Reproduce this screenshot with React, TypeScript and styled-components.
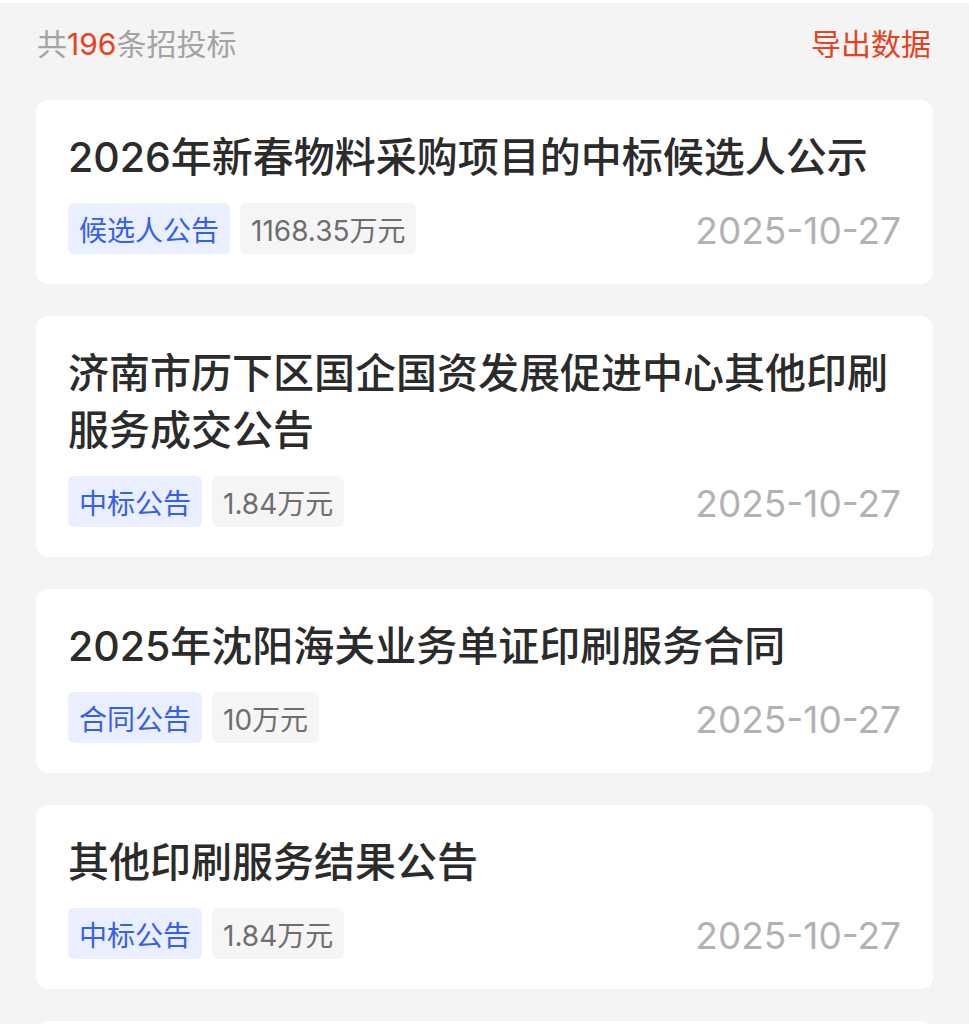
import React from "react";
import styled, { createGlobalStyle } from "styled-components";

// data
type Notice = {
  title: string;
  kind: string;
  amount: string;
  date: string;
};

const notices: Notice[] = [
  { title: "2026年新春物料采购项目的中标候选人公示", kind: "候选人公告", amount: "1168.35万元", date: "2025-10-27" },
  { title: "济南市历下区国企国资发展促进中心其他印刷服务成交公告", kind: "中标公告", amount: "1.84万元", date: "2025-10-27" },
  { title: "2025年沈阳海关业务单证印刷服务合同", kind: "合同公告", amount: "10万元", date: "2025-10-27" },
  { title: "其他印刷服务结果公告", kind: "中标公告", amount: "1.84万元", date: "2025-10-27" },
];

const App: React.FC = () => {
  return (
    <>
      <GlobalStyle />
      <Page>
        <Summary>
          <Count>
            共<em>196</em>条招投标
          </Count>
          <ExportButton type="button">导出数据</ExportButton>
        </Summary>

        <List>
          {notices.map((item, i) => (
            <Card key={i}>
              <Title>{item.title}</Title>
              <Meta>
                <Tags>
                  <Tag $variant="kind">{item.kind}</Tag>
                  <Tag $variant="amount">{item.amount}</Tag>
                </Tags>
                <DateText>{item.date}</DateText>
              </Meta>
            </Card>
          ))}
          {/* 下一张卡片的顶边 */}
          <CardPeek />
        </List>
      </Page>
    </>
  );
};

export default App;

const GlobalStyle = createGlobalStyle`
  html, body {
    margin: 0;
    padding: 0;
    background: #f4f4f4;
  }
  body {
    font-family: Inter, "Noto Sans CJK SC", sans-serif;
  }
`;

const Page = styled.div`
  height: 1024px;
  overflow: hidden;
  border-top: 3px solid #ffffff;
  background: #f4f4f4;
  padding: 0 36px;
  box-sizing: border-box;
`;

const Summary = styled.div`
  display: flex;
  align-items: center;
  justify-content: space-between;
  height: 40px;
  margin-top: 21px;
  padding: 0 2px 0 1px;
`;

const Count = styled.div`
  font-size: 30px;
  line-height: 40px;
  color: #a3a3a3;

  em {
    font-style: normal;
    color: #e8411f;
  }
`;

const ExportButton = styled.button`
  border: 0;
  padding: 0;
  background: none;
  font-family: inherit;
  font-size: 30px;
  line-height: 40px;
  color: #e8411f;
  cursor: pointer;
`;

const List = styled.div`
  display: flex;
  flex-direction: column;
  gap: 32px;
  margin-top: 36px;
`;

const Card = styled.div`
  background: #ffffff;
  border-radius: 12px;
  padding: 29px 32px 30px;
`;

const CardPeek = styled.div`
  flex: none;
  height: 40px;
  background: #ffffff;
  border-radius: 12px 12px 0 0;
`;

const Title = styled.div`
  font-size: 41px;
  line-height: 57px;
  font-weight: 500;
  color: #2b2b2b;
  margin-bottom: 17px;
`;

const Meta = styled.div`
  display: flex;
  align-items: center;
  justify-content: space-between;
`;

const Tags = styled.div`
  display: flex;
  gap: 10px;
`;

const Tag = styled.span<{ $variant: "kind" | "amount" }>`
  display: inline-flex;
  align-items: center;
  height: 51px;
  padding: 0 11px;
  border-radius: 6px;
  font-size: 28px;
  background: ${p => (p.$variant === "kind" ? "#e9effe" : "#f5f5f5")};
  color: ${p => (p.$variant === "kind" ? "#3560ec" : "#6e6e6e")};
`;

const DateText = styled.span`
  font-size: 37px;
  color: #b2b2b2;
  margin-top: 3px;
`;
